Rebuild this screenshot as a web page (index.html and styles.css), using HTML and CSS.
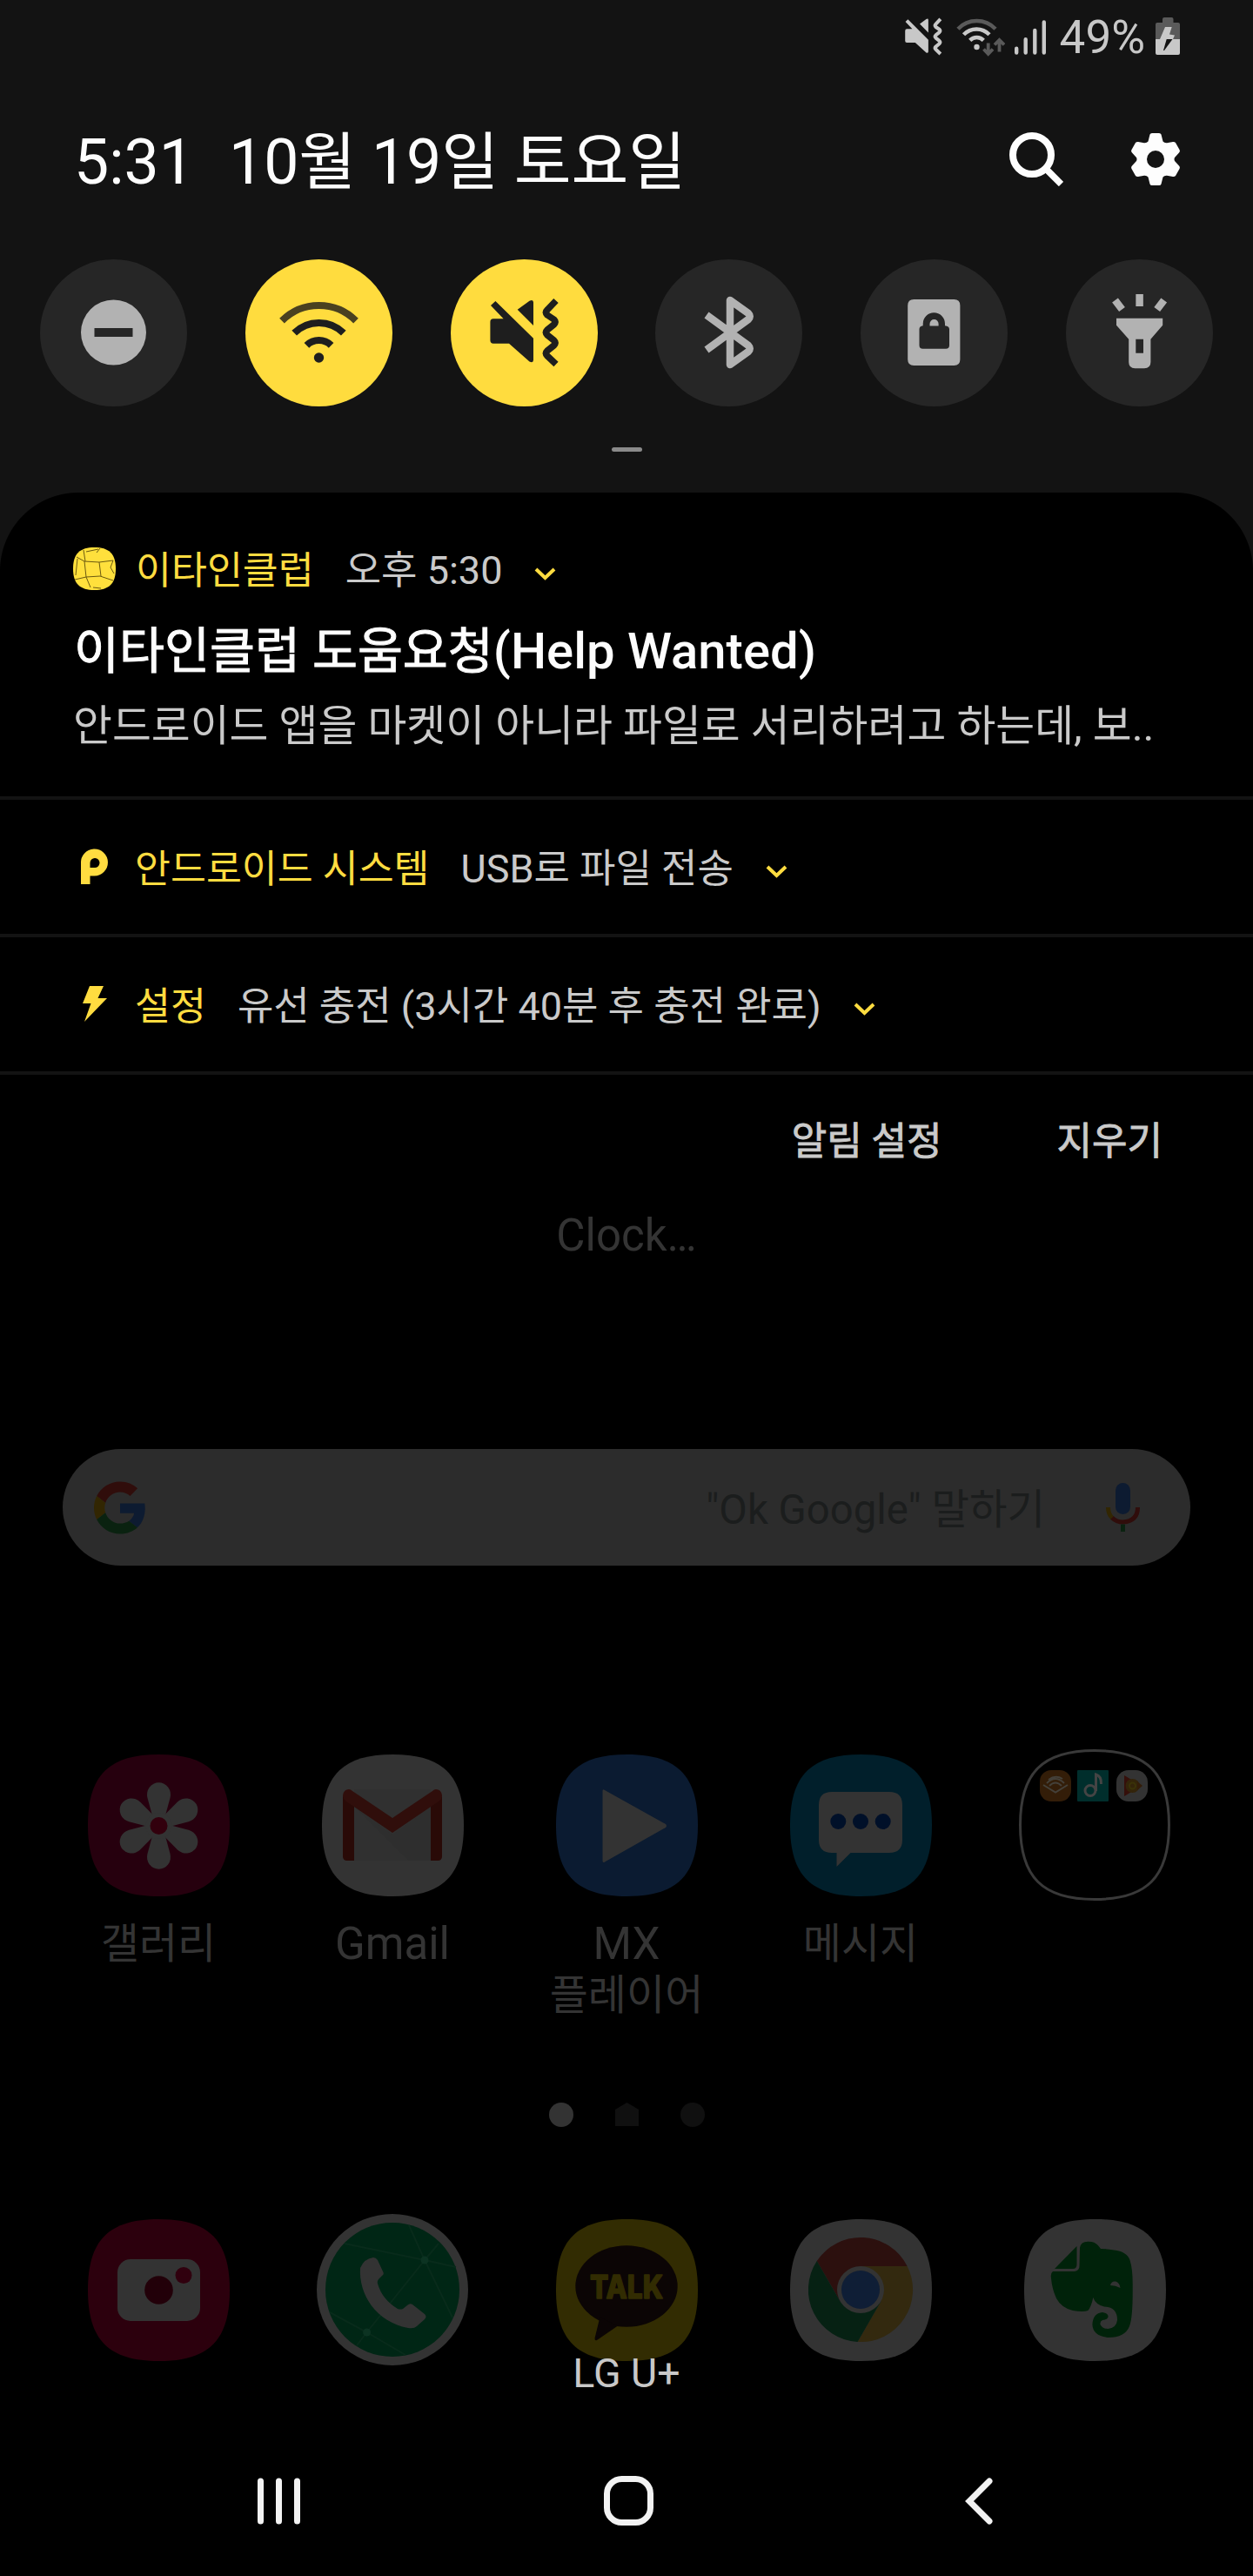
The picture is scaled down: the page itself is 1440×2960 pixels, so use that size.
FILE: index.html
```html
<!DOCTYPE html>
<html lang="ko">
<head>
<meta charset="utf-8">
<title>알림 패널</title>
<link rel="stylesheet" href="styles.css">
</head>
<body>
<svg class="defs" width="0" height="0">
  <defs>
    <path id="squircle" d="M81.500 0C139 0 163 24 163 81.500S139 163 81.500 163 0 139 0 81.500 24 0 81.500 0Z"/>
    <g id="mute">
      <path fill="currentColor" d="M51.400 48L46 53L60.600 68.300H49Q45.400 68.300 45.400 72V93Q45.400 96.700 49 96.700H67L90.500 117.500Q95 119.500 95 115.500V90.700ZM76.700 57.700L90.500 47.700Q95 45.500 95 49.500V76Z"/>
      <path fill="none" stroke="currentColor" stroke-width="7.500" stroke-linejoin="round" d="M121 47.500L111 58Q108 61 111 64L118.500 69Q121.500 72 118.500 75L111 81Q108 84 111 87L118.500 93Q121.500 96 118.500 99L111 105Q108 108 111 111L121 120.500"/>
    </g>
    <path id="chevron" d="M3 3L13.500 13L24 3" fill="none" stroke="#ffdc40" stroke-width="4"/>
    <path id="petal" d="M-7 -10L-13 -32A13.500 14 0 1 1 13 -32L7 -10Z"/>
  </defs>
</svg>

<header class="quick">
  <div class="status">
    <svg class="st-mute" width="43" height="44" viewBox="45 44 80 80" preserveAspectRatio="none"><use href="#mute"/></svg>
    <svg class="st-wifi" width="56" height="46" viewBox="0 0 56 46" fill="none" stroke-width="4.500">
      <path stroke="#5a5a5a" d="M2 13.200A29.700 29.700 0 0 1 45 13.200"/>
      <path stroke="#c8c8c8" d="M8.500 19.700A20.500 20.500 0 0 1 38 19.700M15.700 26.300A11 11 0 0 1 31.300 26.300"/>
      <circle cx="23.500" cy="34" r="3.200" fill="#c8c8c8"/>
      <path stroke="#5a5a5a" stroke-width="3.800" d="M36.700 29.500V42M31.500 36.500L36.700 42L42 36.500M49.500 39.500V26M44 31.500L49.500 26L55 31.500"/>
    </svg>
    <svg class="st-signal" width="36" height="40" viewBox="0 0 36 40" stroke="#c8c8c8" stroke-width="4.400" stroke-linecap="round"><path d="M2.200 32.700V37.500M12.700 22.200V37.500M23.300 12V37.500M33.800 2.500V37.500"/></svg>
    <span class="st-pct">49%</span>
    <svg class="st-batt" width="28" height="43" viewBox="0 0 28 43">
      <path fill="#5a5a5a" d="M8 6V2Q8 0 10 0H18.500Q20.500 0 20.500 2V6H26Q28 6 28 8V25H0V8Q0 6 2 6Z"/>
      <path fill="#c8c8c8" d="M0 25H28V41Q28 43 26 43H2Q0 43 0 41ZM11 11H18.700L16 19.500L22 20.500L20 25H5Z"/>
      <path fill="#131313" d="M12.700 25H19.500L10 38H9Z"/>
    </svg>
  </div>
  <div class="datebar">
    <span class="time">5:31</span>
    <span class="date">10월 19일 토요일</span>
    <svg class="search-ic" width="62" height="62" viewBox="0 0 62 62" fill="none" stroke="#fdfdfd"><circle cx="26" cy="26" r="22" stroke-width="8"/><path d="M43 43L59.500 59.500" stroke-width="7.500"/></svg>
    <svg width="56" height="60" viewBox="0 0 56 60"><path fill="#fdfdfd" fill-rule="evenodd" d="M21.500 1.500Q22 0 24 0H32Q34 0 34.500 1.500L36.500 9.500Q38 11.500 41 11.300L48 10Q50 9.800 51 11L55.500 19Q56.500 21 55 22.500L50 28Q49 30 50 32L55 37.500Q56.500 39 55.500 41L51 49Q50 50.200 48 50L41 48.700Q38 48.500 36.500 50.500L34.500 58.500Q34 60 32 60H24Q22 60 21.500 58.500L19.500 50.500Q18 48.500 15 48.700L8 50Q6 50.200 5 49L.5 41Q-.5 39 1 37.500L6 32Q7 30 6 28L1 22.500Q-.5 21 .5 19L5 11Q6 9.800 8 10L15 11.300Q18 11.500 19.500 9.500ZM28 20A10 10 0 1 0 28 40A10 10 0 1 0 28 20Z"/></svg>
  </div>
  <div class="tiles">
    <div class="tile"><svg viewBox="0 0 169 169"><path fill="currentColor" fill-rule="evenodd" d="M84.500 46.500A37.500 37.500 0 1 0 84.500 121.500A37.500 37.500 0 1 0 84.500 46.500ZM62.500 79H106.500V89H62.500Z"/></svg></div>
    <div class="tile on"><svg viewBox="0 0 169 169" fill="none" stroke="currentColor" stroke-width="8"><path stroke="#4a4120" d="M42 70.600A60 60 0 0 1 127 70.600"/><path d="M56.200 84.700A40 40 0 0 1 112.800 84.700M70.400 98.900A20 20 0 0 1 98.600 98.900"/><circle cx="84.500" cy="113" r="5.700" fill="currentColor" stroke="none"/></svg></div>
    <div class="tile on"><svg viewBox="0 0 169 169"><use href="#mute"/></svg></div>
    <div class="tile"><svg viewBox="0 0 169 169" fill="none" stroke="currentColor" stroke-width="8.500" stroke-linejoin="round"><path d="M59 64L107 99Q110.500 102.500 107 106L86 121V47L107 62Q110.500 65.500 107 69L59 104"/></svg></div>
    <div class="tile"><svg viewBox="0 0 169 169"><path fill="currentColor" fill-rule="evenodd" d="M61.200 46H107.400Q114.400 46 114.400 53V115Q114.400 122 107.400 122H61.200Q54.200 122 54.200 115V53Q54.200 46 61.200 46ZM71.700 76.300Q67.500 76.800 67.500 80.300V98.700Q67.500 102.700 71.500 102.700H98Q102 102.700 102 98.700V80.300Q102 76.800 97 76.300V74A12.600 12.600 0 0 0 71.700 74ZM79.500 76.500V74A5 5 0 0 1 89.600 74V76.500Z"/></svg></div>
    <div class="tile"><svg viewBox="0 0 169 169"><path fill="currentColor" fill-rule="evenodd" d="M58 67.700H111.200V75.700L97.400 91.700V118Q97.400 125.300 90 125.300H79.500Q72.200 125.300 72.200 118V91.700L58 75.700ZM80.300 91.700V107.700H89V91.700Z"/><path stroke="currentColor" stroke-width="8.500" d="M84.600 40V54M56.500 47L64.500 57.500M112.700 47L104.700 57.500"/></svg></div>
  </div>
  <div class="handle"></div>
</header>

<main class="shade">
  <section class="note note-big">
    <div class="note-head">
      <svg class="ball" width="49" height="49" viewBox="0 0 49 49"><path fill="#ffe03c" d="M24.500 0C41 0 49 7 49 24.500S41 49 24.500 49 0 42 0 24.500 8 0 24.500 0Z"/><path fill="none" stroke="#6b5a10" stroke-width="1" d="M4 11L13 16L30 17L46 15M13 16L15 34L2 37M15 34L31 33L46 38M30 17L32 33M12 3L14 16M15 5L29 2M31 1L27 6M5 13L3 32M46 15L43 23L47 30M23 46L32 47M15 34L20 46"/></svg>
      <span class="app">이타인클럽</span>
      <span class="meta">오후 5:30</span>
      <svg class="chev" width="27" height="17"><use href="#chevron"/></svg>
    </div>
    <h1>이타인클럽 도움요청<span class="latin">(Help Wanted)</span></h1>
    <p>안드로이드 앱을 마켓이 아니라 파일로 서리하려고 하는데, 보..</p>
  </section>
  <section class="note note-row">
    <svg class="ic" width="49" height="42" viewBox="0 0 49 42"><path fill="#ffdc40" fill-rule="evenodd" d="M9 41V17A15.500 15.500 0 1 1 24.500 31.500H19.500V41ZM19.500 22H24.500A5.500 5.500 0 1 0 19.500 16.500Z"/></svg>
    <span class="app">안드로이드 시스템</span>
    <span class="meta">USB로 파일 전송</span>
    <svg class="chev" width="27" height="17"><use href="#chevron"/></svg>
  </section>
  <section class="note note-row">
    <svg class="ic bolt" width="49" height="42" viewBox="0 0 49 42"><path fill="#ffdc40" d="M19 0H35L28.500 14H39L13 41L20.500 20H11Z"/></svg>
    <span class="app">설정</span>
    <span class="meta">유선 충전 (3시간 40분 후 충전 완료)</span>
    <svg class="chev" width="27" height="17"><use href="#chevron"/></svg>
  </section>
  <div class="actions"><span>알림 설정</span><span>지우기</span></div>
</main>

<div class="home">
  <div class="clock">Clock…</div>
  <div class="searchbar">
    <svg width="60" height="61" viewBox="0 0 48 48">
      <path fill="#300d0b" d="M24 9.500c3.540 0 6.710 1.220 9.210 3.600l6.850-6.850C35.900 2.380 30.470 0 24 0 14.620 0 6.510 5.380 2.560 13.220l7.980 6.190C12.430 13.720 17.740 9.500 24 9.500z"/>
      <path fill="#0d1b31" d="M46.980 24.550c0-1.570-.15-3.090-.38-4.550H24v9.020h12.940c-.58 2.960-2.260 5.480-4.780 7.180l7.730 6c4.510-4.180 7.090-10.360 7.090-17.650z"/>
      <path fill="#322602" d="M10.530 28.590c-.48-1.450-.76-2.990-.76-4.590s.27-3.140.76-4.590l-7.980-6.190C.92 16.460 0 20.120 0 24c0 3.880.92 7.540 2.560 10.780l7.970-6.190z"/>
      <path fill="#0a2210" d="M24 48c6.480 0 11.930-2.130 15.890-5.810l-7.730-6c-2.150 1.450-4.920 2.300-8.160 2.300-6.260 0-11.570-4.220-13.470-9.910l-7.980 6.190C6.510 42.620 14.620 48 24 48z"/>
    </svg>
    <span class="hint">"Ok Google" 말하기</span>
    <svg width="39" height="56" viewBox="0 0 39 56" fill="none" stroke-width="5">
      <rect x="11" y="0" width="17" height="36" rx="8.500" fill="#0d1b31"/>
      <path stroke="#322602" d="M2.500 28Q2.500 36 7.500 40.500"/><path stroke="#300d0b" d="M7 40Q12 45 19.500 45Q36.500 44 36.500 28"/><path stroke="#0a2210" d="M19.500 47.500V56"/>
    </svg>
  </div>

  <div class="apps">
    <div class="app-cell">
      <svg width="163" height="163"><use href="#squircle" fill="#26000e"/><g transform="translate(81.500 82)" fill="#333"><use href="#petal"/><use href="#petal" transform="rotate(60)"/><use href="#petal" transform="rotate(120)"/><use href="#petal" transform="rotate(180)"/><use href="#petal" transform="rotate(240)"/><use href="#petal" transform="rotate(300)"/><circle r="15"/><circle r="10" fill="#32000d"/></g></svg>
      <span class="ko">갤러리</span>
    </div>
    <div class="app-cell">
      <svg width="163" height="163"><use href="#squircle" fill="#333"/><path fill="#303030" d="M37 40H125V122H37Z"/><path fill="#2e2e2e" d="M37 60L100 122H125V60L81 92Z"/><path fill="#290a07" d="M24 48L37 58V122H29Q24 122 24 117ZM138 48L125 58V122H133Q138 122 138 117Z"/><path fill="#300e0b" d="M24 47Q25 40 31 40Q33 40 35 42L81 73L127 42Q129 40 131 40Q137 40 138 47Q138 52 134 54L81 90L28 54Q24 51 24 47Z"/></svg>
      <span>Gmail</span>
    </div>
    <div class="app-cell">
      <svg width="163" height="163"><use href="#squircle" fill="#0b1b31"/><path fill="#333" d="M53.500 42Q53.500 39 56 41L126 80Q128 82 126 84L56 123.500Q53.500 125 53.500 122Z"/></svg>
      <span>MX</span><span class="ko">플레이어</span>
    </div>
    <div class="app-cell">
      <svg width="163" height="163"><use href="#squircle" fill="#011f2b"/><path fill="#333" d="M48 43H114Q129 43 129 58V98Q129 113 114 113H69.600L53.500 129V113H48Q33 113 33 98V58Q33 43 48 43Z"/><g fill="#001029"><circle cx="55.300" cy="77" r="9"/><circle cx="81" cy="77" r="9"/><circle cx="106.700" cy="77" r="9"/></g></svg>
      <span class="ko">메시지</span>
    </div>
    <div class="app-cell folder">
      <svg width="174" height="174" viewBox="0 0 174 174">
        <path fill="none" stroke="#393939" stroke-width="3" d="M87 1.500C147 1.500 172.500 27 172.500 87S147 172.500 87 172.500 1.500 147 1.500 87 27 1.500 87 1.500Z"/>
        <rect x="24" y="24" width="36" height="36" rx="13" fill="#331d08"/><path fill="none" stroke="#444039" stroke-width="2" d="M28 41L42 49.500L56 41M32 39Q42 29 52 39M35 42Q42 35 49 42M34 35Q42 29 50 34"/>
        <rect x="67" y="24" width="36" height="36" rx="1" fill="#002e2c"/><circle cx="82" cy="47.500" r="6" fill="none" stroke="#444" stroke-width="3"/><path fill="none" stroke="#444" stroke-width="3" d="M88.500 48V29Q95 31 94.500 40"/>
        <rect x="112" y="24" width="36" height="36" rx="14" fill="#333"/><path fill="#350f0a" d="M121 30L141 42L121 54Z"/><circle cx="130.500" cy="42" r="8" fill="#33240a"/><path fill="#331d08" d="M136 37L142 42L136 47Z"/><circle cx="130.500" cy="42" r="3.500" fill="none" stroke="#3a3208" stroke-width="2"/>
      </svg>
    </div>
  </div>

  <div class="pager">
    <i class="dot active"></i>
    <svg width="27" height="27"><path fill="#101010" d="M0 8L13.500 0L27 8V27H0Z"/></svg>
    <i class="dot"></i>
  </div>

  <div class="dock">
    <svg width="163" height="163"><use href="#squircle" fill="#2c000d"/><rect x="34" y="46" width="95" height="71" rx="15" fill="#333"/><circle cx="81.500" cy="81.500" r="16.300" fill="#220009"/><circle cx="110" cy="64.500" r="9.500" fill="#30000e"/></svg>
    <svg width="174" height="174"><circle cx="87" cy="87" r="87" fill="#333"/><circle cx="87" cy="87" r="77" fill="#002615"/><path fill="none" stroke="#082b1b" stroke-width="2" d="M57.600 136L124 53L106 13M124 53L140 34M32 34L124 53L160 61M124 53L156 119M15 113L57.600 136L46 151M57.600 136L102 162"/><g fill="#0c3322"><circle cx="124" cy="53" r="4.500"/><circle cx="57.600" cy="136" r="4.500"/></g><path fill="#333" d="M65 50Q55 51 50 62C48 92 68 124 105 131Q112 132 115 129L124 121Q127 118 124 115L110 104Q107 102 104 105L99 109Q96 110 93 109Q75 98 70 80Q69 77 72 74L75 71Q78 69 76 66L70 53Q68 50 65 50Z"/></svg>
    <svg width="163" height="163"><use href="#squircle" fill="#322c02"/><ellipse cx="81" cy="77" rx="58.700" ry="46.700" fill="#0b0505"/><path fill="#0b0505" d="M49.600 112V116L44.500 137Q44.500 140 47 139L71 122.500Z"/><text class="talk" x="39" y="91" textLength="84" lengthAdjust="spacingAndGlyphs">TALK</text></svg>
    <svg width="163" height="163"><use href="#squircle" fill="#333"/><path fill="#2c100e" d="M30.800 48.100A60 60 0 0 1 134.600 54H81L57.600 94.500Z"/><path fill="#33290f" d="M134.600 54A60 60 0 0 1 77.600 141L104.400 94.500L81 54Z"/><path fill="#062113" d="M77.600 141A60 60 0 0 1 30.800 48.100L57.600 94.500H104.400Z"/><circle cx="81" cy="81" r="27" fill="#333"/><circle cx="81" cy="81" r="22" fill="#0f1e36"/></svg>
    <svg width="163" height="163"><use href="#squircle" fill="#333"/><path fill="#00220a" d="M60.500 31V52Q60.500 57 56 57H35ZM64 33Q65 25.700 73.300 25.700Q81 25.500 84.800 30L88 34Q95 34 103 35.500Q118 37 121.500 47Q125 58 124.700 78Q125 113 121 123Q116 136 96.300 136Q79 134 78.400 121Q79 108 90 107Q97 108 96.500 112.500Q95 116 90 116Q87 117 87.500 121Q90 126 96.300 126Q106 125 107 116Q107 101 92 100.500Q82 98 79.300 90Q77 101 73.300 105Q68 107 56 105Q43 102 37 91Q32 80 31 68Q30 62 33 60H58Q63.500 59 63.500 54Z"/><path fill="#333" d="M99 76Q100 71 105 71.500Q110 73 110.500 79Q105 76 99 76Z"/></svg>
  </div>
  <div class="carrier">LG U+</div>
</div>

<nav class="nav">
  <svg width="49" height="54" stroke="#f2f2f2" stroke-width="7" stroke-linecap="round"><path d="M3.500 4V50M24.500 4V50M45.500 4V50"/></svg>
  <svg class="nav-home" width="57" height="57"><rect x="3.500" y="3.500" width="50" height="50" rx="17" fill="none" stroke="#f2f2f2" stroke-width="7"/></svg>
  <svg width="32" height="54" fill="none" stroke="#f2f2f2" stroke-width="7" stroke-linecap="round"><path d="M28 4L5 27L28 50"/></svg>
</nav>
</body>
</html>
```
FILE: styles.css
```css
* { box-sizing: border-box; }
body {
  margin: 0;
  width: 1440px;
  height: 2960px;
  overflow: hidden;
  display: flex;
  flex-direction: column;
  background: #000;
  color: #cacaca;
  font-family: Roboto, "Noto Sans CJK KR", sans-serif;
  white-space: nowrap;
}
svg { display: block; flex: none; }
.defs { position: absolute; }

.quick { height: 566px; background: #131313; color: #c8c8c8; }
.status { height: 86px; padding: 20px 84px 0 0; display: flex; justify-content: flex-end; align-items: flex-start; }
.st-wifi { margin-left: 16px; }
.st-signal { margin: 3px 0 0 11px; }
.st-pct { margin: 0 12px 0 16px; font-size: 53px; line-height: 46px; }
.datebar { height: 201px; padding: 0 84px 0 85px; display: flex; align-items: center; color: #fdfdfd; font-size: 71.500px; line-height: 80px; }
.time { width: 178px; }
.date { flex: 1; }
.datebar svg { margin-top: -8px; }
.datebar .search-ic { margin-right: 78px; }
.tiles { padding: 11px 46px 0; display: flex; justify-content: space-between; }
.tile { width: 169px; height: 169px; border-radius: 50%; background: #262626; color: #b2b2b2; }
.tile.on { background: #ffdc3e; color: #1e1e1e; }
.handle { width: 35px; height: 5px; margin: 47px auto 0; border-radius: 3px; background: #8a8a8a; }

.shade {
  background: radial-gradient(circle at 90px 90px, #000 89.500px, #131313 90.500px) 0 0 / 90px 90px no-repeat,
    radial-gradient(circle at 0 90px, #000 89.500px, #131313 90.500px) 100% 0 / 90px 90px no-repeat, #000;
}
.note { border-bottom: 4px solid #131313; }
.note-big { height: 353px; padding: 59px 84px 0; }
.note-head { height: 56px; display: flex; align-items: center; }
.app, .meta { line-height: 56px; padding-top: 6px; }
.app { color: #ffdc40; font-size: 44.500px; }
.meta { font-size: 45px; margin-left: 36px; }
.ball { margin-right: 23px; }
.chev { margin: 13px 0 0 36px; }
h1 { margin: 28px 0 0 1px; font-size: 56.500px; line-height: 80px; font-weight: 400; color: #fdfdfd; -webkit-text-stroke: 1px #fdfdfd; }
h1 .latin { font-size: 58px; font-weight: 500; line-height: 1; -webkit-text-stroke: 0; }
p { margin: 16px 0 0; font-size: 48.800px; line-height: 60px; }
.note-row { height: 158px; padding: 0 84px; display: flex; align-items: center; }
.note-row .ic { margin-right: 22px; }
.note-row .chev { margin-top: 11px; }
.actions { height: 151px; padding: 0 104px 6px 0; display: flex; justify-content: flex-end; align-items: center; gap: 132px; font-size: 44px; -webkit-text-stroke: .9px #cacaca; }

.home { color: #343434; }
.clock { height: 66px; padding-top: 1px; text-align: center; font-size: 51px; line-height: 66px; }
.searchbar { height: 134px; margin: 213px 72px 0; padding: 0 58px 0 36px; border-radius: 67px; background: #2c2c2c; display: flex; align-items: center; }
.hint { margin-left: auto; margin-right: 70px; padding-bottom: 3px; font-size: 47.300px; color: #1b1d1d; }
.apps { height: 330px; margin-top: 211px; padding: 0 47.500px; display: grid; grid-template-columns: repeat(5, 269px); }
.app-cell { display: flex; flex-direction: column; align-items: center; padding-top: 6px; font-size: 51px; line-height: 59px; }
.app-cell span:first-of-type { margin-top: 25px; }
.app-cell .ko { font-size: 48px; }
.folder { padding-top: 0; }
.pager { height: 180px; padding-top: 76px; display: flex; justify-content: center; align-items: flex-start; gap: 48px; }
.dot { width: 28px; height: 28px; border-radius: 50%; background: #101010; }
.dot.active { background: #333; }
.dock { height: 174px; margin-top: 24px; padding: 0 47.500px; display: grid; grid-template-columns: repeat(5, 269px); place-items: center; }
.talk { font-family: Inter, sans-serif; font-weight: 800; font-size: 37px; fill: #322c02; stroke: #322c02; stroke-width: 1.500px; stroke-linejoin: round; }
.carrier { margin-top: -20px; text-align: center; font-size: 46.500px; line-height: 58px; color: #c8c8c8; position: relative; }

.nav { height: 57px; margin-top: 89px; padding-left: 296px; display: flex; align-items: center; }
.nav-home { margin: 0 358px 0 349px; }
```
